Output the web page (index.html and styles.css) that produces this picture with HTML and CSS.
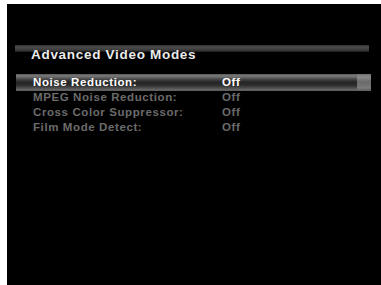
FILE: index.html
```html
<!DOCTYPE html>
<html>
<head>
<meta charset="utf-8">
<link rel="stylesheet" href="styles.css">
</head>
<body>
<div class="screen">
  <div class="title">Advanced Video Modes</div>
  <div class="menu">
    <div class="row selected"><span class="label">Noise Reduction:</span><span class="value">Off</span></div>
    <div class="row"><span class="label">MPEG Noise Reduction:</span><span class="value">Off</span></div>
    <div class="row"><span class="label">Cross Color Suppressor:</span><span class="value">Off</span></div>
    <div class="row"><span class="label">Film Mode Detect:</span><span class="value">Off</span></div>
  </div>
</div>
</body>
</html>
```
FILE: styles.css
```css
html, body {
  margin: 0;
  padding: 0;
  background: #ffffff;
}
body {
  padding: 4px 0 0 7px;
  font-family: "Liberation Sans", Arial, sans-serif;
  font-weight: bold;
}
.screen {
  width: 374px;
  height: 281px;
  background: #000;
  padding-top: 41px;
  box-sizing: border-box;
}
.title {
  margin: 0 12px 0 8px;
  padding: 1px 0 0 16px;
  height: 18px;
  line-height: 18px;
  font-size: 13.5px;
  letter-spacing: 0.7px;
  color: #ececec;
  background: linear-gradient(to bottom, #2e2e2e 0, #4a4a4a 2px, #3c3c3c 5px, #1c1c1c 7px, transparent 7px) no-repeat;
  background-size: 100% 7px;
}
.menu {
  margin: 11px 10px 0 9px;
  display: flex;
  flex-direction: column;
}
.row {
  display: flex;
  height: 15px;
  line-height: 15px;
  font-size: 11.5px;
  letter-spacing: 0.6px;
  color: #6b6b6b;
  padding-left: 17px;
}
.row .label {
  width: 189px;
  flex: none;
}
.row.selected {
  position: relative;
  height: 17px;
  line-height: 17px;
  margin: -1px 0 -1px 0;
  color: #ffffff;
  background: linear-gradient(to bottom, #5a5a5a 0, #7a7a7a 2px, #4a4a4a 5px, #262626 8px, #2a2a2a 11px, #4e4e4e 14px, #6a6a6a 16px, #505050 17px);
}
.row.selected::after {
  content: "";
  position: absolute;
  right: 0;
  top: 0;
  width: 14px;
  height: 17px;
  background: linear-gradient(to bottom, #707070 0, #8a8a8a 3px, #6a6a6a 8px, #7a7a7a 14px, #5a5a5a 17px);
}
```
